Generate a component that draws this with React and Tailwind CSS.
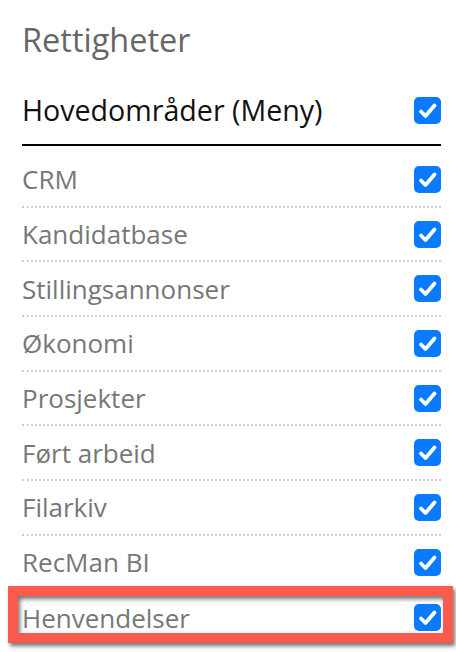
import React from "react";

const items = [
  "CRM",
  "Kandidatbase",
  "Stillingsannonser",
  "Økonomi",
  "Prosjekter",
  "Ført arbeid",
  "Filarkiv",
  "RecMan BI",
  "Henvendelser",
];

function CheckBox() {
  return (
    <div className="flex h-[27px] w-[27px] shrink-0 items-center justify-center rounded-[5px] bg-[#0a7aff]">
      <svg width="27" height="27" viewBox="0 0 27 27" fill="none">
        <path
          d="M7 14.5l4.5 4.5L20.5 8.5"
          stroke="white"
          strokeWidth="3.8"
          strokeLinecap="round"
          strokeLinejoin="round"
        />
      </svg>
    </div>
  );
}

export default function App() {
  return (
    <div className="min-h-[652px] w-[456px] bg-white pl-[22px] pr-[15px] font-['Open_Sans',sans-serif]">
      {/* Title */}
      <h2 className="pt-[18px] text-[32.5px] leading-[44px] text-[#666]">Rettigheter</h2>

      {/* Header row */}
      <div className="mt-[28px] flex items-center justify-between border-b-2 border-black pb-[14px]">
        <span className="text-[28.6px] leading-[40px] text-[#111]">Hovedområder (Meny)</span>
        <CheckBox />
      </div>

      {/* Items */}
      <div className="pt-[7px]">
        {items.map((item, i) => {
          const last = i === items.length - 1;
          return (
            <div
              key={item}
              className={`relative flex h-[54.7px] items-center justify-between ${
                last ? "" : "border-b-2 border-dotted border-[#d0d0d0]"
              }`}
            >
              <span className="text-[26px] leading-[36px] text-[#777]">{item}</span>
              <CheckBox />
              {last && (
                <div className="pointer-events-none absolute -left-[14px] -right-[12px] top-[-5px] h-[57px] border-[10px] border-[#fc5a4c] shadow-[2px_3px_4px_rgba(0,0,0,0.55),inset_2px_3px_4px_rgba(0,0,0,0.55)]" />
              )}
            </div>
          );
        })}
      </div>
    </div>
  );
}
